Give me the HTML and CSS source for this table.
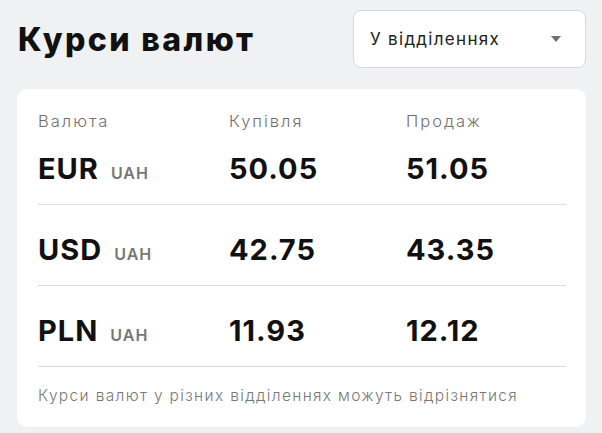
FILE: index.html
```html
<!DOCTYPE html>
<html lang="uk">
<head>
  <meta charset="UTF-8" />
  <title>Курси валют</title>
  <meta name="viewport" content="width=device-width, initial-scale=1.0">
  <link rel="stylesheet" href="styles.css">
</head>
<body>
  <div class="top">
    <h1>Курси валют</h1>
    <div class="select">
      <span>У відділеннях</span>
      <svg class="caret" width="10" height="6" viewBox="0 0 10 6"><path d="M0 0h10L5 6z" fill="#6f6f6f"/></svg>
    </div>
  </div>

  <div class="card">
    <div class="row head">
      <div>Валюта</div>
      <div>Купівля</div>
      <div>Продаж</div>
    </div>
    <div class="row rate first">
      <div class="cur">EUR <span class="base">UAH</span></div>
      <div>50.05</div>
      <div>51.05</div>
    </div>
    <div class="row rate">
      <div class="cur">USD <span class="base">UAH</span></div>
      <div>42.75</div>
      <div>43.35</div>
    </div>
    <div class="row rate">
      <div class="cur">PLN <span class="base">UAH</span></div>
      <div>11.93</div>
      <div>12.12</div>
    </div>
    <p class="note">Курси валют у різних відділеннях можуть відрізнятися</p>
  </div>
</body>
</html>
```

FILE: styles.css
```css
body {
  background: #eff1f3;
  color: #111;
  font-family: "Inter", "Noto Sans", sans-serif;
  margin: 0;
  padding: 10px 16px 6px 17px;
}
.top {
  display: flex;
  justify-content: space-between;
  align-items: center;
}
h1 {
  margin: 0 0 0 1px;
  font-size: 32px;
  font-weight: 800;
  letter-spacing: 2.4px;
}
.select {
  width: 233px;
  height: 58px;
  box-sizing: border-box;
  background: #fff;
  border: 1px solid #d6d9dc;
  border-radius: 8px;
  display: flex;
  align-items: center;
  justify-content: space-between;
  padding: 0 24px 0 16px;
  font-size: 17px;
  letter-spacing: 1.3px;
  color: #222;
}
.card {
  margin-top: 21px;
  background: #fff;
  border-radius: 10px;
  padding: 21px 20px 21px 21px;
}
.row {
  display: grid;
  grid-template-columns: 191px 177px 1fr;
  align-items: center;
}
.head {
  font-size: 16.5px;
  line-height: 22px;
  color: #707070;
  font-weight: 300;
  letter-spacing: 2px;
}
.rate {
  font-size: 29px;
  line-height: 30px;
  font-weight: 700;
  letter-spacing: 1px;
  padding: 30px 0 20px;
  border-bottom: 1px solid #dcdde0;
}
.rate.first {
  padding-top: 22px;
}
.cur {
  display: flex;
  align-items: baseline;
  gap: 12px;
}
.base {
  font-size: 16px;
  line-height: 1;
  font-weight: 600;
  color: #777;
  letter-spacing: 1px;
}
.note {
  margin: 0;
  padding-top: 19px;
  font-size: 15.5px;
  line-height: 20px;
  color: #777;
  font-weight: 300;
  letter-spacing: 1.35px;
}
```
